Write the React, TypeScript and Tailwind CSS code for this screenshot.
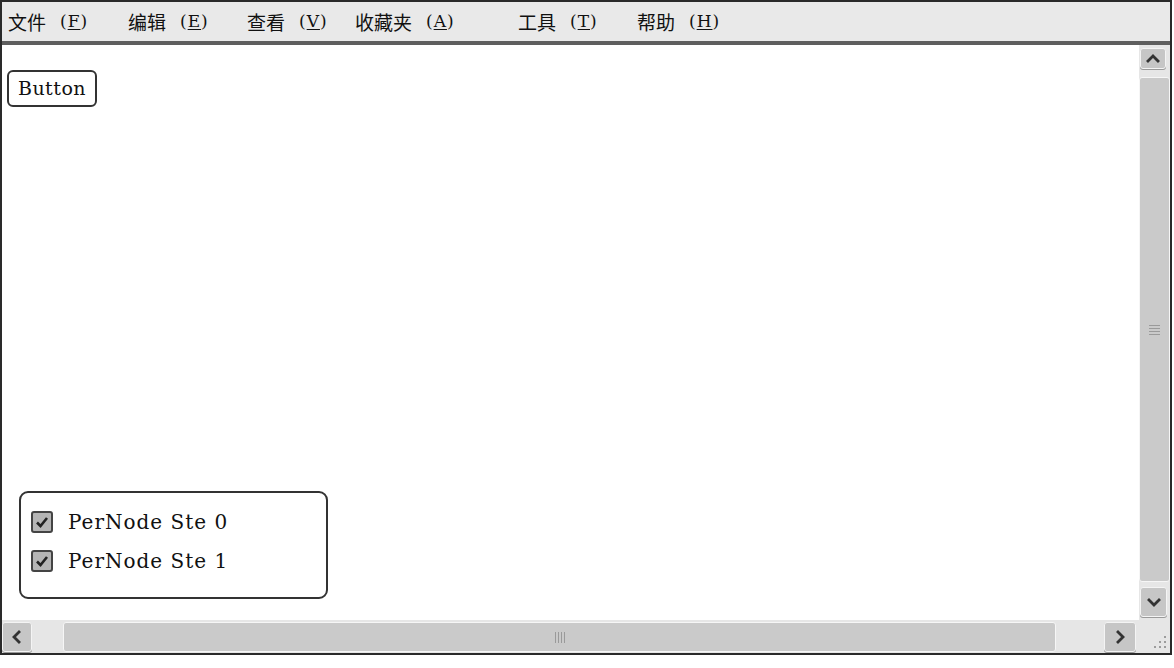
const menu = [
  { label: "文件", key: "F", w: "w-[120px]" },
  { label: "编辑", key: "E", w: "w-[119px]" },
  { label: "查看", key: "V", w: "w-[108px]" },
  { label: "收藏夹", key: "A", w: "w-[163px]" },
  { label: "工具", key: "T", w: "w-[119px]" },
  { label: "帮助", key: "H", w: "w-[120px]" },
];

function Chevron({ dir }: { dir: "up" | "down" | "left" | "right" }) {
  const d = {
    up: "M3 10 L8 5 L13 10",
    down: "M3 6 L8 11 L13 6",
    left: "M10 3 L5 8 L10 13",
    right: "M6 3 L11 8 L6 13",
  }[dir];
  return (
    <svg width="16" height="16" viewBox="0 0 16 16">
      <path d={d} fill="none" stroke="#333" strokeWidth="2.8" strokeLinecap="square" />
    </svg>
  );
}

function ScrollButton({ dir, className }: { dir: "up" | "down" | "left" | "right"; className: string }) {
  return (
    <div
      className={`flex items-center justify-center rounded-[3px] border border-[#f4f4f4] bg-[#c6c6c6] shadow-[0_1px_0_#9a9a9a] ${className}`}
    >
      <Chevron dir={dir} />
    </div>
  );
}

function Check({ label }: { label: string }) {
  return (
    <div className="flex items-center gap-[15px] h-[39px]">
      <div className="flex h-[22px] w-[22px] items-center justify-center rounded-[3px] border-2 border-[#444] bg-[#b5b5b5]">
        <svg width="14" height="14" viewBox="0 0 14 14">
          <path d="M2 7.5 L5.5 11 L12 3" fill="none" stroke="#222" strokeWidth="2.6" />
        </svg>
      </div>
      <span className="text-[20px] leading-none text-[#111] tracking-[1px]" style={{ fontFamily: '"DejaVu Serif", serif' }}>
        {label}
      </span>
    </div>
  );
}

export default function App() {
  return (
    <div className="h-[668px] w-[1174px] bg-white">
      <div className="flex h-[655px] w-[1172px] flex-col border-2 border-[#2a2a2a]">
        <div className="flex h-[39px] items-center bg-[#e9e9e9] pl-[6px]">
          {menu.map((m) => (
            <div key={m.key} className={`flex items-center ${m.w}`}>
              <span
                className="text-[19px] leading-none text-[#111]"
                style={{ fontFamily: '"Noto Sans CJK SC", sans-serif' }}
              >
                {m.label}
              </span>
              <span
                className="ml-[14px] text-[17px] leading-none text-[#111] tracking-[1px]"
                style={{ fontFamily: '"DejaVu Serif", serif' }}
              >
                (<span className="underline underline-offset-2">{m.key}</span>)
              </span>
            </div>
          ))}
        </div>
        <div className="h-[4px] bg-[#5e5e5e]" />
        <div className="flex flex-1">
          <div className="flex flex-1 flex-col justify-between pb-[21px] pl-[5px] pt-[25px]">
            <div
              className="flex h-[37px] w-[90px] items-center justify-center rounded-[6px] border-2 border-[#333] text-[19px] tracking-[0.5px] text-[#111]"
              style={{ fontFamily: '"DejaVu Serif", serif' }}
            >
              Button
            </div>
            <div className="ml-[12px] flex h-[108px] w-[309px] flex-col justify-center rounded-[9px] border-2 border-[#333] pb-[8px] pl-[10px]">
              <Check label="PerNode Ste 0" />
              <Check label="PerNode Ste 1" />
            </div>
          </div>
          <div className="flex w-[31px] flex-col bg-[#e6e6e6] pb-[3px] pt-[3px]">
            <ScrollButton dir="up" className="ml-[1px] h-[21px] w-[26px]" />
            <div className="mt-[8px] mb-[5px] flex flex-1 items-center justify-center rounded-[3px] border border-[#f6f6f6] bg-[#cacaca]">
              <div className="flex flex-col gap-[2px]">
                <div className="h-[1px] w-[11px] bg-[#9a9a9a]" />
                <div className="h-[1px] w-[11px] bg-[#9a9a9a]" />
                <div className="h-[1px] w-[11px] bg-[#9a9a9a]" />
                <div className="h-[1px] w-[11px] bg-[#9a9a9a]" />
              </div>
            </div>
            <ScrollButton dir="down" className="ml-[1px] h-[30px] w-[27px]" />
          </div>
        </div>
        <div className="flex h-[33px] items-stretch bg-[#e6e6e6] pb-[1px] pt-[2px]">
          <ScrollButton dir="left" className="h-[30px] w-[30px]" />
          <div className="ml-[31px] mr-[48px] flex flex-1 items-center justify-center rounded-[3px] border border-[#f6f6f6] bg-[#cacaca]">
            <div className="flex gap-[2px]">
              <div className="h-[11px] w-[1px] bg-[#9a9a9a]" />
              <div className="h-[11px] w-[1px] bg-[#9a9a9a]" />
              <div className="h-[11px] w-[1px] bg-[#9a9a9a]" />
              <div className="h-[11px] w-[1px] bg-[#9a9a9a]" />
            </div>
          </div>
          <ScrollButton dir="right" className="h-[30px] w-[32px]" />
          <div className="relative w-[34px]">
            <svg className="absolute bottom-[2px] right-[2px]" width="16" height="16" viewBox="0 0 16 16">
              <g fill="#9c9c9c">
                <rect x="12" y="2" width="2" height="2" />
                <rect x="7" y="7" width="2" height="2" />
                <rect x="12" y="7" width="2" height="2" />
                <rect x="2" y="12" width="2" height="2" />
                <rect x="7" y="12" width="2" height="2" />
                <rect x="12" y="12" width="2" height="2" />
              </g>
            </svg>
          </div>
        </div>
      </div>
    </div>
  );
}
